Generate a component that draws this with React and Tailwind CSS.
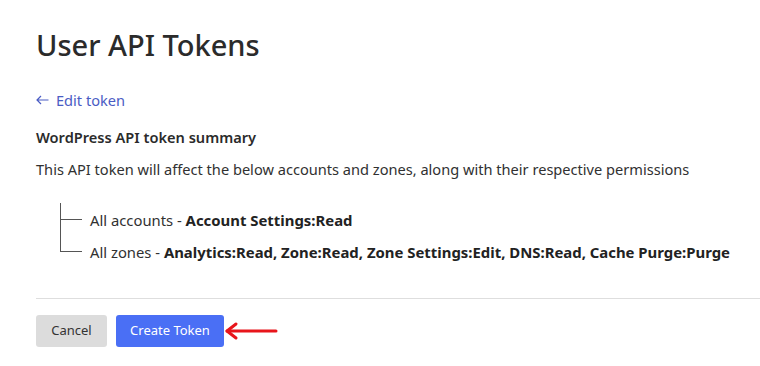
export default function App() {
  return (
    <div className="w-[760px] h-[366px] overflow-hidden bg-white text-[#313131]" style={{ fontFamily: '"Segoe UI", "Noto Sans", sans-serif' }}>
      <div className="pl-9 pt-[26px]">
        <h1 className="text-[29px] leading-[38px] font-medium text-[#2b2b2b]">User API Tokens</h1>
        <a className="mt-[26px] flex items-center gap-[7px] text-[14.6px] leading-5 text-[#4a5cc4]">
          <svg width="13" height="10" viewBox="0 0 13 10">
            <path d="M12.5 5 H1 M5 1 L1 5 L5 9" stroke="#4a5cc4" strokeWidth="1.2" fill="none" />
          </svg>
          <span>Edit token</span>
        </a>
        <h2 className="mt-[17px] text-[14.6px] leading-5 font-semibold text-[#2b2b2b]">WordPress API token summary</h2>
        <p className="mt-3 text-[14.6px] leading-5">This API token will affect the below accounts and zones, along with their respective permissions</p>
        <div className="mt-[24px] ml-6 flex">
          <div className="w-[22px] flex flex-col">
            <div className="h-[17px] border-l border-b border-[#555]" />
            <div className="h-[32px] border-l border-b border-[#555]" />
          </div>
          <div className="pl-2 flex flex-col text-[14.8px] leading-5">
            <div className="mt-[7px]">All accounts - <b className="font-bold text-[14.9px] text-[#222]">Account Settings:Read</b></div>
            <div className="mt-3">All zones - <b className="font-bold text-[14.9px] text-[#222]">Analytics:Read, Zone:Read, Zone Settings:Edit, DNS:Read, Cache Purge:Purge</b></div>
          </div>
        </div>
        <div className="mt-[36px] border-t border-[#dedede]" />
        <div className="mt-4 flex items-center gap-[9px]">
          <button className="h-[32px] w-[71px] rounded-[3px] bg-[#dcdcdc] text-[13px] text-[#333]">Cancel</button>
          <button className="h-[32px] w-[108px] rounded-[3px] bg-[#4a6ff5] text-[13px] text-white">Create Token</button>
          <svg width="56" height="20" viewBox="0 0 56 20" className="-ml-[10px]">
            <path d="M4 10 H53" stroke="#e8151b" strokeWidth="3" strokeLinecap="round" />
            <path d="M13 3 L4 10 L13 17" stroke="#e8151b" strokeWidth="3" fill="none" strokeLinecap="round" strokeLinejoin="round" />
          </svg>
        </div>
      </div>
    </div>
  );
}
